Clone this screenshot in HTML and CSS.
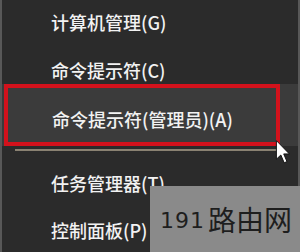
FILE: index.html
```html
<!DOCTYPE html>
<html lang="zh-CN">
<head>
<meta charset="utf-8">
<title>菜单</title>
<link rel="stylesheet" href="styles.css">
</head>
<body>
<div class="menu">
  <div class="item item1">计算机管理(G)</div>
  <div class="item item2">命令提示符(C)</div>
  <div class="hl-row">
    <div class="redbox">命令提示符(管理员)(A)</div>
  </div>
  <div class="sep"></div>
  <div class="item item4">任务管理器(T)</div>
  <div class="item item5">控制面板(P)</div>

  <svg class="cursor" width="16" height="24" viewBox="0 0 12 20">
    <path d="M0.5 0.5 L0.5 16 L4.2 12.5 L7 19 L9.3 18 L6.6 11.6 L11.3 11.6 Z" fill="#ffffff" stroke="#111111" stroke-width="0.8" stroke-linejoin="round"/>
  </svg>

  <div class="watermark"><span class="wm-num">191</span><span class="wm-cn">路由网</span></div>
</div>
</body>
</html>
```

FILE: styles.css
```css
html, body {
  margin: 0;
  padding: 0;
}
body {
  width: 300px;
  height: 252px;
  overflow: hidden;
  background: #2b2b2b;
  font-family: "Noto Sans CJK SC", "Noto Sans", sans-serif;
}
.menu {
  position: relative;
  box-sizing: border-box;
  width: 300px;
  height: 252px;
  border-left: 2px solid #585858;
  border-right: 2px solid #585858;
  background: #2b2b2b;
  color: #f2f2f2;
  font-size: 18px;
  font-weight: 500;
}
.item {
  box-sizing: border-box;
  padding-left: 49px;
  line-height: 18px;
  white-space: nowrap;
}
.item1 {
  height: 45px;
  padding-top: 13px;
}
.item2 {
  height: 39px;
  padding-top: 16px;
}
.hl-row {
  height: 62px;
  background: #3b3b3b;
}
.redbox {
  box-sizing: border-box;
  margin-left: 2px;
  width: 276px;
  height: 62px;
  border: 4px solid #d3121c;
  padding-top: 22px;
  padding-left: 44px;
  line-height: 18px;
  white-space: nowrap;
}
.sep {
  margin-top: 3px;
  margin-left: 13px;
  width: 262px;
  height: 2px;
  background: #8a8272;
}
.item4 {
  height: 46px;
  padding-top: 23px;
}
.item5 {
  padding-top: 24px;
  height: 50px;
}
.cursor {
  position: absolute;
  left: 273px;
  top: 140px;
}
.watermark {
  position: absolute;
  left: 148px;
  top: 186px;
  right: -2px;
  bottom: 0;
  background: #8a8a8a;
  color: #1e1e1e;
  display: flex;
  align-items: center;
  padding-left: 10px;
  white-space: nowrap;
  font-weight: 400;
}
.wm-num {
  font-family: "DejaVu Sans", sans-serif;
  font-size: 22px;
  letter-spacing: 1px;
  margin-right: 3px;
  padding-top: 3px;
}
.wm-cn {
  font-size: 28px;
  line-height: 30px;
}
```
